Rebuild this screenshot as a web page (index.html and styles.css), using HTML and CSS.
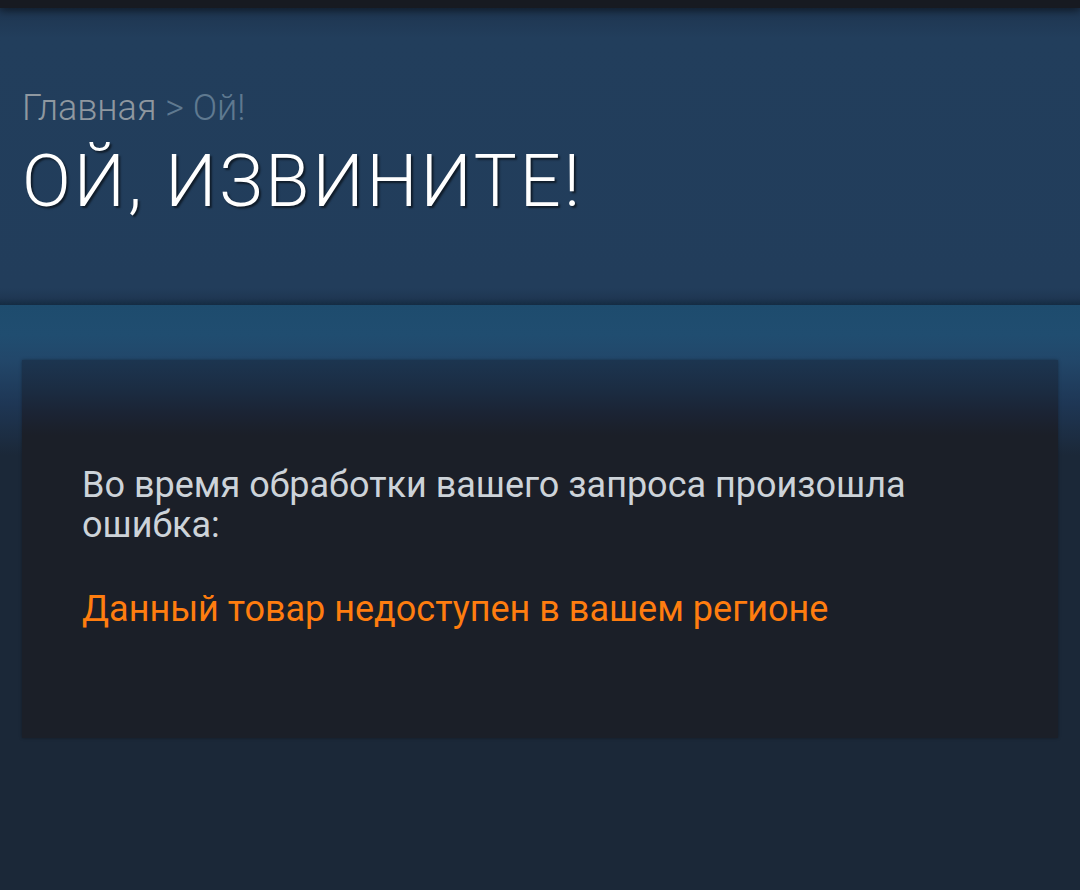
FILE: index.html
```html
<!DOCTYPE html>
<html lang="ru">
<head>
    <meta charset="UTF-8">
    <meta name="viewport" content="width=device-width, initial-scale=1.0">
    <title>Ой, извините!</title>
    <link rel="stylesheet" href="styles.css">
</head>
<body>
    <div class="topbar"></div>

    <header class="page-header">
        <div class="breadcrumbs">
            <a href="#" class="crumb-link">Главная</a>
            <span class="crumb-current">&gt; Ой!</span>
        </div>
        <h1 class="page-title">ОЙ, ИЗВИНИТЕ!</h1>
    </header>

    <main class="content">
        <div class="error-box">
            <p class="error-intro">Во время обработки вашего запроса произошла ошибка:</p>
            <p class="error-message">Данный товар недоступен в вашем регионе</p>
        </div>
    </main>
</body>
</html>
```

FILE: styles.css
```css
html, body {
    margin: 0;
    padding: 0;
}
body {
    font-family: Roboto, "Noto Sans", Arial, sans-serif;
    background-color: #1b2838;
    min-height: 890px;
}
.topbar {
    height: 8px;
    background: #171a21;
    box-shadow: 0 2px 8px rgba(0, 0, 0, 0.6);
    position: relative;
    z-index: 2;
}
.page-header {
    height: 297px;
    box-sizing: border-box;
    padding: 80px 22px 0;
    background: linear-gradient(to bottom, #1e3550 0, #223e5c 30px, #223d5b 280px, #1f3753 290px, #142c43 297px);
}
.breadcrumbs {
    font-size: 36px;
    font-weight: 300;
    line-height: 40px;
    color: #8f98a0;
}
.crumb-link {
    color: #8f98a0;
    text-decoration: none;
}
.crumb-current {
    color: #5f7990;
}
.page-title {
    margin: 14px 0 0;
    font-size: 72px;
    font-weight: 300;
    line-height: 80px;
    letter-spacing: 3px;
    color: #ffffff;
    text-shadow: 2px 2px 2px rgba(0, 0, 0, 0.55);
}
.content {
    padding: 55px 22px 150px;
    background: linear-gradient(to bottom, #1e4c6e 0, #204d70 30px, #22476a 55px, #1e3654 100px, #1b2838 150px);
}
.error-box {
    height: 378px;
    box-sizing: border-box;
    padding: 105px 60px 0;
    background: linear-gradient(to bottom, #1c3550 0, #1b2c42 30px, #1b2333 55px, #1b1f28 75px);
    box-shadow: 0 0 3px rgba(0, 0, 0, 0.35);
}
.error-intro {
    margin: 0;
    font-size: 36px;
    line-height: 40px;
    color: #cdd3d9;
}
.error-message {
    margin: 44px 0 0;
    font-size: 36px;
    line-height: 40px;
    color: #ff7d0f;
}
```
